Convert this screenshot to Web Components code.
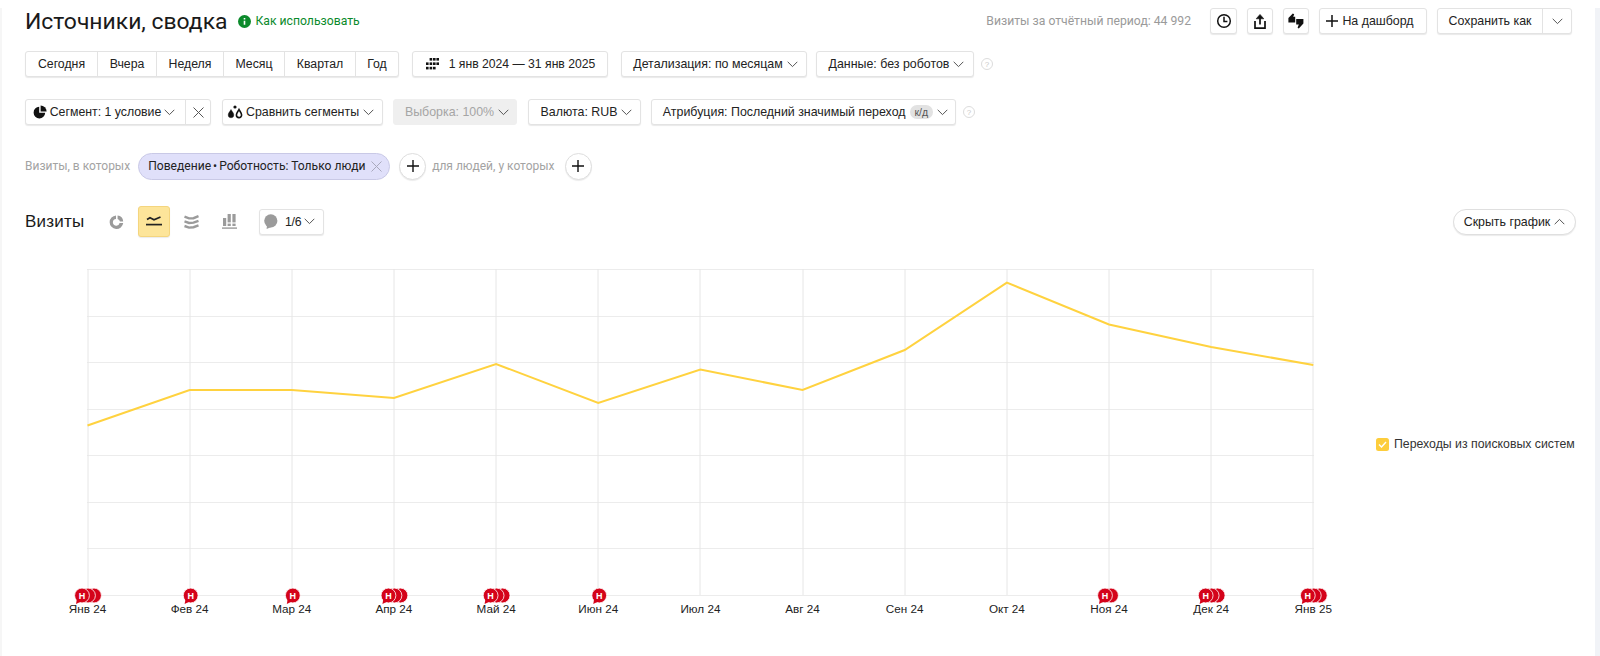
<!DOCTYPE html>
<html lang="ru"><head><meta charset="utf-8"><title>Источники, сводка</title>
<style>
html,body{margin:0;padding:0;background:#fff}
body{width:1600px;height:656px;overflow:hidden;font:13px "Liberation Sans",Arial,sans-serif;color:#222}
</style></head><body>
<x-page>
  <x-row top="8" h="26">
    <x-title>Источники, сводка</x-title>
    <x-howto style="margin-left:10px">Как использовать</x-howto>
    <x-spacer></x-spacer>
    <x-muted style="margin-right:19px;color:#9a9a9a;font-size:12.2px">Визиты за отчётный период: 44 992</x-muted>
    <x-btn w="27" icon="clock"></x-btn>
    <x-btn w="26" icon="share" style="margin-left:10px"></x-btn>
    <x-btn w="26" icon="quote" style="margin-left:10px"></x-btn>
    <x-btn w="108" icon="plus" style="margin-left:10px" pad="6" gap="4">На дашборд</x-btn>
    <x-split style="margin-left:10px"></x-split>
  </x-row>
  <x-row top="17" h="26">
    <x-group>
      <x-seg w="72">Сегодня</x-seg><x-seg w="59">Вчера</x-seg><x-seg w="67">Неделя</x-seg><x-seg w="61">Месяц</x-seg><x-seg w="71">Квартал</x-seg><x-seg w="44">Год</x-seg>
    </x-group>
    <x-btn w="196" icon="dots" style="margin-left:13px;font-size:12.2px" gap="10">1 янв 2024 — 31 янв 2025</x-btn>
    <x-btn w="186" chev lpad="3" style="margin-left:13px">Детализация: по месяцам</x-btn>
    <x-btn w="158" chev lpad="3" style="margin-left:9px">Данные: без роботов</x-btn>
    <x-help style="margin-left:7px"></x-help>
  </x-row>
  <x-row top="22" h="26">
    <x-group>
      <x-seg w="160" icon="pie" chev style="padding-right:3px;gap:3px">Сегмент: 1 условие</x-seg><x-seg w="26" icon="close"></x-seg>
    </x-group>
    <x-btn w="161" icon="drops" chev gap="3" pad="4" style="margin-left:11px">Сравнить сегменты</x-btn>
    <x-btn w="124" chev lpad="4" disabled style="margin-left:10px">Выборка: 100%</x-btn>
    <x-btn w="113" chev lpad="4" style="margin-left:11px">Валюта: RUB</x-btn>
    <x-btn w="305" chev lpad="4" kd style="margin-left:10px">Атрибуция: Последний значимый переход</x-btn>
    <x-help style="margin-left:7px"></x-help>
  </x-row>
  <x-row top="27" h="28">
    <x-muted style="font-size:12px">Визиты, в которых</x-muted>
    <x-chip style="margin-left:8px">Поведение<i></i>•<i></i>Роботность: Только люди</x-chip>
    <x-add style="margin-left:9px"></x-add>
    <x-muted style="margin-left:6px;font-size:12px">для людей, у которых</x-muted>
    <x-add style="margin-left:10px"></x-add>
  </x-row>
  <x-row top="26" h="31">
    <x-h2>Визиты</x-h2>
    <x-viewbar style="margin-left:16px"></x-viewbar>
    <x-spacer></x-spacer>
    <x-pill>Скрыть график</x-pill>
  </x-row>
  <x-chart-area></x-chart-area>
</x-page>
<script>
const ICONS={
clock:`<svg width="16" height="16" viewBox="0 0 16 16" fill="none" stroke="#111" stroke-width="1.5"><circle cx="8" cy="8" r="6.3"/><path d="M8 3.8V8.4H11.4"/></svg>`,
share:`<svg width="14" height="17" viewBox="0 0 14 17" fill="none" stroke="#111" stroke-width="1.7"><path d="M2 8V15.2H12V8"/><path d="M7 11.5V3"/><path d="M3.2 5.8 7 1.4 10.8 5.8Z" fill="#111" stroke-width=".6"/></svg>`,
quote:`<svg width="16" height="16" viewBox="0 0 16 16" fill="#111"><path d="M4.8 .4 .4 5V9.4H7.2V3.8H5.2L6.2 1.2Z"/><path d="M8.2 6H15.4V10.4L10.8 15.6 9.6 14.8 10.8 11.4H8.2Z"/></svg>`,
plus:`<svg width="12" height="12" viewBox="0 0 12 12" stroke="#111" stroke-width="1.5"><path d="M6 0V12M0 6H12"/></svg>`,
dots:`<svg width="14" height="12" viewBox="0 0 14 12" fill="#111"><rect x="4.6" y="0" width="2.6" height="2.6"/><rect x="8" y="0" width="2.6" height="2.6"/><rect x="11.4" y="0" width="2.6" height="2.6"/><rect x="1" y="4.4" width="2.6" height="2.6"/><rect x="4.6" y="4.4" width="2.6" height="2.6"/><rect x="8" y="4.4" width="2.6" height="2.6"/><rect x="11.4" y="4.4" width="2.6" height="2.6"/><rect x="1" y="8.8" width="2.6" height="2.6"/><rect x="4.6" y="8.8" width="2.6" height="2.6"/><rect x="8" y="8.8" width="2.6" height="2.6"/></svg>`,
pie:`<svg width="14" height="14" viewBox="0 0 14 14" fill="#111"><path d="M6.2 1.8A5.8 5.8 0 1 0 12.2 7.8H6.2Z"/><path d="M7.6 .4A6 6 0 0 1 13.6 6.4H7.6Z"/></svg>`,
close:`<svg width="11" height="11" viewBox="0 0 11 11" stroke="#555" stroke-width="1"><path d="M.5 .5 10.5 10.5M10.5 .5 .5 10.5"/></svg>`,
drops:`<svg width="16" height="14" viewBox="0 0 16 14" fill="none" stroke="#111" stroke-width="1.6"><path d="M4 4.5C2.8 6.8 1.2 8 1.2 10A2.8 2.8 0 0 0 6.8 10C6.8 8 5.2 6.8 4 4.5Z" fill="#111" stroke-width=".4"/><path d="M12 4.5C10.8 6.8 9.4 8 9.4 10A2.6 2.6 0 0 0 14.6 10C14.6 8 13.2 6.8 12 4.5Z"/><circle cx="8" cy="2" r="1.6" fill="#111" stroke="none"/></svg>`
};
const CHEV=`<svg width="11" height="7" viewBox="0 0 11 7" fill="none" stroke="#555" stroke-width="1"><path d="M.7 .8 5.5 5.6 10.3 .8"/></svg>`;
const BORDER=`border:1px solid #e3e3e3;box-shadow:0 1px 1px rgba(0,0,0,.09);border-radius:3px;background:#fff;box-sizing:border-box;`;
function def(name,css,html,setup){
  customElements.define(name,class extends HTMLElement{
    constructor(){super();this.attachShadow({mode:'open'});}
    connectedCallback(){
      if(this.done)return;this.done=true;
      const h=typeof html==='function'?html(this):html;
      this.shadowRoot.innerHTML=`<style>${css}</style>${h}`;
      if(setup)setup(this);
    }
  });
}
def('x-page',':host{display:block;position:relative;height:656px;background:#fff;padding-left:25px;box-sizing:border-box}:host::after{content:"";position:absolute;right:0;top:0;bottom:0;width:5px;background:#f1f3f7}:host::before{content:"";position:absolute;left:0;top:0;bottom:0;width:2px;background:#f6f6f6}','<slot></slot>');
def('x-row',':host{display:flex;align-items:center;box-sizing:border-box;padding-right:28px;margin-top:var(--t);height:var(--h)}','<slot></slot>',e=>{e.style.setProperty('--t',e.getAttribute('top')+'px');e.style.setProperty('--h',e.getAttribute('h')+'px');});
def('x-spacer',':host{flex:1}','');
def('x-title',':host{display:block;font:22.9px/28px Roboto,sans-serif;color:#1a1a1a;position:relative;top:1px}','<slot></slot>');
def('x-howto',':host{display:flex;align-items:center;gap:5px;font:12.2px Roboto,sans-serif;color:#0b8a2b}svg{display:block}','<svg width="13" height="13" viewBox="0 0 13 13"><circle cx="6.5" cy="6.5" r="6.5" fill="#0b8a2b"/><path d="M6.5 3v1.4M6.5 5.8v4" stroke="#fff" stroke-width="1.6"/></svg><slot></slot>');
def('x-muted',':host{display:block;color:#a3a3a3;white-space:nowrap;font-family:Roboto,sans-serif}','<slot></slot>');
def('x-btn',`:host{display:inline-flex;align-items:center;justify-content:flex-start;${BORDER}height:26px;white-space:nowrap;font-size:12.4px;color:#222;flex:none}
:host([disabled]){background:#efefef;border-color:#efefef;box-shadow:none;color:#a5a5a5}
.c{display:flex;align-items:center;width:100%;justify-content:center;box-sizing:border-box}
.k{font-size:10.5px;background:#e2e2e2;border-radius:8px;padding:1px 5px;margin-left:4px;color:#555}
.ch{margin-left:4px;display:flex}svg{display:block}`,
e=>{const i=e.getAttribute('icon');const g=e.getAttribute('gap')||4;const p=e.getAttribute('pad')||0;const l=e.getAttribute('lpad')||0;
 return `<div class="c" style="padding-right:${p}px;padding-left:${l}px">${i?`<span style="display:flex;margin-right:${e.textContent.trim()?g:0}px">${ICONS[i]}</span>`:''}<slot></slot>${e.hasAttribute('kd')?'<span class="k">к/д</span>':''}${e.hasAttribute('chev')?`<span class="ch">${CHEV}</span>`:''}</div>`;},
e=>{e.style.width=e.getAttribute('w')+'px';});
def('x-group',`:host{display:inline-flex;${BORDER}height:26px;flex:none}`,'<slot></slot>');
def('x-seg',`:host{display:inline-flex;align-items:center;justify-content:center;box-sizing:border-box;border-right:1px solid #e3e3e3;font-size:12.3px;color:#222;white-space:nowrap;gap:4px}:host(:last-child){border-right:0}svg{display:block}`,
e=>{const i=e.getAttribute('icon');return `${i?ICONS[i]:''}<slot></slot>${e.hasAttribute('chev')?CHEV:''}`;},
e=>{e.style.width=(e.getAttribute('w')-(e.nextElementSibling?0:2))+'px';});
def('x-split',`:host{display:inline-flex;${BORDER}height:26px;width:135px;font-size:12.4px;color:#222;flex:none}.a{flex:1;display:flex;align-items:center;justify-content:center;border-right:1px solid #e3e3e3}.b{width:28px;display:flex;align-items:center;justify-content:center}svg{display:block}`,
`<div class="a">Сохранить как</div><div class="b">${CHEV}</div>`);
def('x-help',':host{display:inline-flex;width:12px;height:12px;border:1px solid #dcdcdc;border-radius:50%;box-sizing:border-box;align-items:center;justify-content:center;font:8px "Liberation Sans",sans-serif;color:#c8c8c8}','?');
def('x-chip',`:host{display:inline-flex;align-items:center;height:27px;border-radius:14px;background:#e0e0fa;border:1px solid #c9c9e6;box-sizing:border-box;padding:0 6px 0 9px;font:12.1px Roboto,sans-serif;color:#222;white-space:nowrap;width:252px}svg{display:block;margin-left:5px;flex:none}::slotted(i){display:inline-block;width:2px}`,
`<span><slot></slot></span><svg width="11" height="11" viewBox="0 0 11 11" stroke="#a9a9bd" stroke-width="1"><path d="M.5 .5 10.5 10.5M10.5 .5 .5 10.5"/></svg>`);
def('x-add',`:host{display:inline-flex;width:27px;height:27px;border-radius:50%;border:1px solid #dedede;box-shadow:0 1px 1px rgba(0,0,0,.08);box-sizing:border-box;align-items:center;justify-content:center;background:#fff;flex:none}svg{display:block}`,`<svg width="12" height="12" viewBox="0 0 12 12" stroke="#111" stroke-width="1.4"><path d="M6 0V12M0 6H12"/></svg>`);
def('x-h2',':host{display:block;font:17px "Liberation Sans",sans-serif;color:#1a1a1a;letter-spacing:.2px;width:59px}','<slot></slot>');
def('x-viewbar',`:host{display:flex;align-items:center;gap:0}svg{display:block}
.i{width:32px;height:31px;display:flex;align-items:center;justify-content:center;box-sizing:border-box;margin-left:var(--m,0)}
.on{background:#fde59a;border:1px solid #f4d57e;border-radius:3px;box-shadow:0 1px 1px rgba(0,0,0,.08)}
.c{${BORDER}width:65px;height:26px;display:flex;align-items:center;justify-content:flex-start;padding-left:3px;font-size:12.3px;margin-left:14px;letter-spacing:-.3px}
.c span{margin:0 3px 0 7px}`,
`<div class="i"><svg width="15" height="14" viewBox="0 0 15 14" fill="#9b9b9b"><path fill-rule="evenodd" d="M7 .4A6.8 6.8 0 1 0 14.2 8H10.6A3.4 3.4 0 1 1 7 3.9Z"/><path d="M8.6 .6A6.4 6.4 0 0 1 14.2 6.4H11A3.4 3.4 0 0 0 8.6 3.9Z"/></svg></div>
<div class="i on" style="--m:6px"><svg width="16" height="11" viewBox="0 0 16 11" fill="none" stroke="#222" stroke-width="1.7"><path d="M1 3.5 4 1.8 8 3.8 14.5 1"/><path d="M0 8.6H16"/></svg></div>
<div class="i" style="--m:5px"><svg width="15" height="14" viewBox="0 0 15 14" fill="none" stroke="#9b9b9b" stroke-width="2.4"><path d="M.5 1.6 5 3.4 9.5 3.2 14.5 1.2"/><path d="M.5 6.4 5 8 9.5 7.6 14.5 5.8"/><path d="M.5 11 5 12.6 9.5 12.2 14.5 10.4"/></svg></div>
<div class="i" style="--m:6px"><svg width="15" height="15" viewBox="0 0 15 15" fill="#9b9b9b"><rect x="1" y="4" width="3.2" height="8"/><rect x="5.6" y="0" width="3.2" height="8.4"/><rect x="5.6" y="9.6" width="3.2" height="2.4"/><rect x="10.4" y="0" width="3.2" height="8.4"/><rect x="10.4" y="9.6" width="3.2" height="2.4"/><rect x="0" y="13.4" width="15" height="1.4"/></svg></div>
<div class="c"><svg width="15" height="15" viewBox="0 0 15 15" fill="#9b9b9b"><circle cx="7.8" cy="6.8" r="6.6"/><path d="M4 11 3.6 15 9 12.8Z"/></svg><span>1/6</span>${CHEV}</div>`);
def('x-pill',`:host{display:inline-flex;align-items:center;justify-content:center;gap:4px;width:123px;height:26px;border:1px solid #dfdfdf;border-radius:13px;box-shadow:0 1px 1px rgba(0,0,0,.08);box-sizing:border-box;font-size:12.4px;color:#222;background:#fff;margin-right:-4px}svg{display:block;transform:scaleY(-1)}`,`<slot></slot>${CHEV}`);
def('x-legend',`:host{display:flex;align-items:center;gap:5px;font-size:12.3px;color:#333;white-space:nowrap;align-self:flex-start;margin-top:179px}svg{display:block}`,
`<svg width="13" height="13" viewBox="0 0 13 13"><rect width="13" height="13" rx="2.5" fill="#fdcd3c"/><path d="M3 6.6 5.5 9 10 4" fill="none" stroke="#fff" stroke-width="1.4"/></svg><slot></slot>`);
function chart(){
  const X=i=>87.5+i*102.15;
  const vals=[425.5,390,390,398,364,403,369.5,390,350,282.6,324.5,347,365];
  const labels=['Янв 24','Фев 24','Мар 24','Апр 24','Май 24','Июн 24','Июл 24','Авг 24','Сен 24','Окт 24','Ноя 24','Дек 24','Янв 25'];
  const mk=[[0,3],[1,1],[2,1],[3,3],[4,3],[5,1],[10,2],[11,3],[12,3]];
  const top=269,bot=595,off=258;
  let s='';
  for(let k=0;k<8;k++){const y=Math.round(top+k*46.57)-off+.5;s+=`<path d="M87 ${y}H1314" stroke="#ececec" stroke-width="1"/>`;}
  for(let i=0;i<13;i++){s+=`<path d="M${Math.round(X(i))} ${top-off}V${bot-off}" stroke="#e6e6e6" stroke-width="1"/>`;}
  s+=`<polyline fill="none" stroke="#ffd23f" stroke-width="2" points="${vals.map((v,i)=>X(i)+','+(v-off)).join(' ')}"/>`;
  labels.forEach((l,i)=>{s+=`<text x="${X(i)}" y="${613-off}" text-anchor="middle" font-family="Liberation Sans" font-size="11.7" fill="#222">${l}</text>`;});
  mk.forEach(([i,n])=>{
    const x0=X(i)+(n===1?1:n===2?-4:-5.5),y=595.5-off;
    for(let j=n-1;j>=0;j--){
      const x=x0+j*6;
      s+=`<circle cx="${x}" cy="${y}" r="7.4" fill="#d4031a" stroke="#fff" stroke-width=".8"/>`;
      if(j===0){s+=`<path d="M${x-5} ${y+3}L${x-6} ${y+8.5}L${x-1} ${y+6}Z" fill="#d4031a"/><text x="${x}" y="${y+3.2}" text-anchor="middle" font-family="Liberation Sans" font-weight="700" font-size="9" fill="#fff">Н</text>`;}
    }
  });
  return `<svg width="1345" height="375" viewBox="0 0 1345 375" style="display:block;margin-left:-25px">${s}</svg>`;
}
def('x-chart-area',':host{display:flex;margin-top:21px}',()=>chart()+'<x-legend style="margin-left:31px">Переходы из поисковых систем</x-legend>');
</script>
</body></html>
